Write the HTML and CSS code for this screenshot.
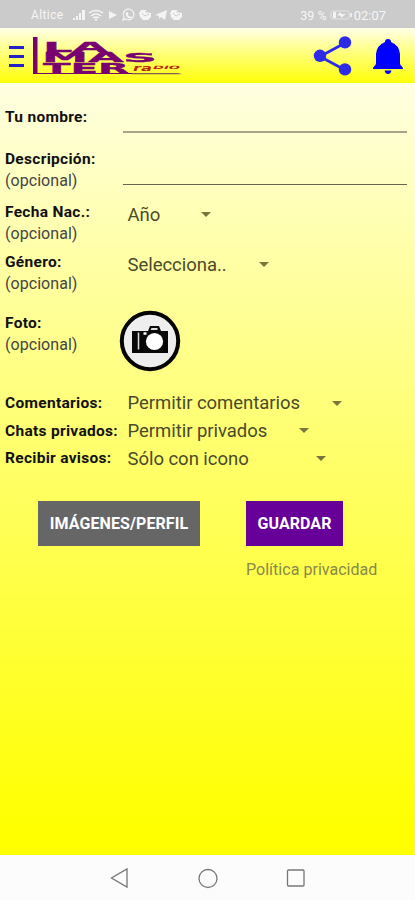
FILE: index.html
```html
<!DOCTYPE html>
<html lang="es">
<head>
<meta charset="utf-8">
<title>La Master Radio</title>
<link rel="stylesheet" href="styles.css">
</head>
<body>
<div class="status">
  <span class="carrier">Altice</span>
  <svg class="status-icons" width="112" height="14" viewBox="0 0 112 14" fill="#f4f4f4">
    <path d="M0 12V10h2v2zM3 12V8h2v4zM6 12V5h2v7zM9 12V2h3v10z"/>
    <g fill="none" stroke="#f4f4f4" stroke-width="1.4"><path d="M16 5q7-5 14 0M18 8q5-4 10 0M20 10q3-2 6 0"/></g>
    <circle cx="23" cy="11.500" r="1.200"/>
    <path d="M36 3l8 4-8 4z"/>
    <path d="M50 12l1-3a5.300 5.300 0 1 1 2 2z" fill="none" stroke="#f4f4f4" stroke-width="1.200"/>
    <path d="M53 4.500l1.500-.5 1 2-.7 1 2 1.700 1-.7 1 1.500c-3 3-7-2-5.800-5z"/>
    <path d="M68 2h6l-2 2 6 1v4l-3 3h-5l-3-3-1-4zM82 7l12-5-2 10-4-3-2 2v-3zM99 2h6l-2 2 6 1v4l-3 3h-5l-3-3-1-4z"/>
    <path d="M69 5l3 3 4-2M100 5l3 3 4-2" fill="none" stroke="#ccc"/>
  </svg>
  <span class="percent">39 %</span>
  <svg class="battery" width="23" height="12" viewBox="0 0 23 12"><rect x="1" y="2" width="18" height="8" rx="1.500" fill="none" stroke="#e4e4e4"/><path d="M3 3h3v6H3zM7 6l4-3v2h5l-5 4V7z" fill="#f4f4f4"/><path d="M20 4h2v4h-2z" fill="#eee"/></svg>
  <span class="clock">02:07</span>
</div>

<header class="header">
  <div class="burger"><i></i><i></i><i></i></div>
  <svg class="logo" width="156" height="42" viewBox="0 0 156 42">
    <path d="M1 0h4.500v36H100v1H1z" fill="#780070"/>
    <path d="M100 36h46l4 1.200h-50z" fill="#8a5a50"/>
    <g class="logo-text">
      <text x="11" y="14.500" textLength="65" lengthAdjust="spacingAndGlyphs">LA</text>
      <text x="10" y="25.300" textLength="82" lengthAdjust="spacingAndGlyphs">MA</text>
      <text class="logo-s" x="91" y="25.300" textLength="34" lengthAdjust="spacingAndGlyphs">S</text>
      <text x="11" y="36" textLength="86" lengthAdjust="spacingAndGlyphs">TER</text>
    </g>
    <g class="logo-radio">
      <text x="101" y="34" textLength="19" lengthAdjust="spacingAndGlyphs" font-size="9">ra</text>
      <text x="121" y="31.500" textLength="27" lengthAdjust="spacingAndGlyphs" font-size="4.500">DIO</text>
    </g>
  </svg>
  <svg class="share" width="40" height="42" viewBox="0 0 40 42" fill="#2b2be8"><path d="M32 7L7 20.500l25 13.500" fill="none" stroke="#2b2be8" stroke-width="2.800"/><circle cx="32" cy="6.400" r="6.200"/><circle cx="7" cy="19.800" r="6.200"/><circle cx="32" cy="33.400" r="6.200"/></svg>
  <svg class="bell" width="32" height="38" viewBox="0 0 32 38" fill="#00f"><path d="M13 4a3 3 0 0 1 6 0q8 3 9 12v9c0 3 3 3 3 6H1c0-3 3-3 3-6v-9q1-9 9-12zM12.500 32.500h7q-1 3.500-3.500 3.500t-3.500-3.500z"/></svg>
</header>

<main class="form">
  <div class="row name"><label>Tu nombre:</label><div class="input"></div></div>
  <div class="row desc"><label>Descripción:<small>(opcional)</small></label><div class="input"></div></div>
  <div class="row birth"><label>Fecha Nac.:<small>(opcional)</small></label><div class="select year"><span>Año</span><i></i></div></div>
  <div class="row gender"><label>Género:<small>(opcional)</small></label><div class="select sex"><span>Selecciona..</span><i></i></div></div>
  <div class="row photo"><label>Foto:<small>(opcional)</small></label>
    <svg width="62" height="62" viewBox="0 0 62 62"><circle cx="31" cy="31" r="28.200" fill="#eee" stroke="#050505" stroke-width="4"/><path d="M13 21h16l2-5h9l2 5h7v22H13z" fill="#080808"/><path d="M32.500 18h6v2h-7z" fill="#ddd"/><path d="M19.500 22.500v17" stroke="#ddd" stroke-width="1.500"/><circle cx="35.500" cy="31.500" r="8.600" fill="#fff"/><path d="M24.500 23.500h3" stroke="#fff" stroke-width="2.500"/></svg>
  </div>
  <div class="row line"><label>Comentarios:</label><div class="select comments"><span>Permitir comentarios</span><i></i></div></div>
  <div class="row line"><label>Chats privados:</label><div class="select chats"><span>Permitir privados</span><i></i></div></div>
  <div class="row line"><label>Recibir avisos:</label><div class="select notices"><span>Sólo con icono</span><i></i></div></div>
  <div class="actions">
    <button class="btn images">IMÁGENES/PERFIL</button>
    <button class="btn save">GUARDAR</button>
  </div>
  <a class="policy">Política privacidad</a>
</main>

<nav class="nav">
  <svg width="20" height="22" viewBox="0 0 20 22"><path d="M17 2v18L1.500 11z"/></svg>
  <svg width="20" height="22" viewBox="0 0 20 22"><circle cx="10" cy="11.500" r="9"/></svg>
  <svg width="20" height="22" viewBox="0 0 20 22"><rect x="1.500" y="3" width="16.500" height="16" rx="1"/></svg>
</nav>
</body>
</html>
```
FILE: styles.css
```css
* { box-sizing: border-box; }
body {
  margin: 0;
  width: 415px;
  height: 900px;
  overflow: hidden;
  display: flex;
  flex-direction: column;
  font-family: Roboto, "Liberation Sans", sans-serif;
}
svg { display: block; flex: none; }
.status {
  height: 28px;
  background: #cbcbcb;
  color: #f6f6f6;
  display: flex;
  align-items: center;
  padding: 2px 29px 0 31px;
  font-size: 12px;
  white-space: nowrap;
}
.carrier { width: 42px; letter-spacing: .4px; }
.percent { margin-left: auto; font-size: 12.5px; }
.battery { margin: 0 1px 0 3px; }
.clock { font-size: 12.8px; letter-spacing: .1px; }
.header {
  height: 55px;
  display: flex;
  align-items: flex-start;
  padding: 8px 11px 0 9px;
  background: linear-gradient(#ffffe8, #ffff70 50%, #ffff08);
}
.burger { width: 15px; padding-top: 10px; display: grid; gap: 6px; }
.burger i { height: 3px; background: #2222c8; }
.logo { margin: 1px 0 0 8px; }
.logo-text {
  font-family: "DejaVu Sans", sans-serif;
  font-weight: bold;
  font-size: 13.5px;
  fill: #780070;
  stroke: #780070;
  stroke-width: .3px;
}
.logo-s { font-size: 12.5px; }
.logo-radio {
  font-family: "DejaVu Sans", sans-serif;
  font-weight: bold;
  font-style: italic;
  fill: #b82810;
}
.share { margin-left: auto; margin-right: 19px; }
.bell { margin-top: 2px; }
.form {
  height: 772px;
  padding-top: 23px;
  background: linear-gradient(#ffffe2, #ffffa8 22%, #ffff60 53%, #ff0 97%);
}
.row {
  display: grid;
  grid-template-columns: 118px 1fr;
  padding: 0 8px 0 5px;
  font-size: 15.5px;
}
.row label {
  font-weight: bold;
  line-height: 22px;
  letter-spacing: .3px;
  color: #111;
  white-space: nowrap;
}
.row small {
  display: block;
  font-weight: normal;
  font-size: 16px;
  letter-spacing: .05px;
  color: #444;
}
.input { border-bottom: 1px solid #66664a; }
.name { height: 41.5px; }
.name .input { height: 27px; border-bottom: 2px solid #a5a588; }
.desc { height: 53.5px; }
.desc .input { height: 37.5px; border-bottom: 1.5px solid #666650; }
.birth { height: 50px; }
.gender { height: 55px; }
.photo { height: 86px; padding-top: 6px; }
.photo svg { margin-left: -4px; margin-top: -2px; }
.line { height: 27.7px; }
.select {
  display: flex;
  align-items: center;
  justify-content: space-between;
  height: 22px;
  margin-left: 4.5px;
  font-size: 18.5px;
  letter-spacing: -.04px;
  color: #4a4a2a;
  white-space: nowrap;
}
.select span { padding-top: .6px; }
.select i {
  margin-right: 1px;
  border: 5.5px solid transparent;
  border-top-color: #77773d;
  border-bottom: 0;
}
.year { width: 84px; margin-top: 2.5px; }
.sex { width: 142px; margin-top: 2.5px; }
.comments { width: 215px; }
.chats { width: 182px; }
.notices { width: 199px; }
.actions { display: flex; gap: 46px; padding: 26px 0 0 38px; }
.btn {
  height: 45px;
  border: 0;
  padding: 0;
  color: #fff;
  font: bold 16px Roboto, sans-serif;
  letter-spacing: .08px;
  white-space: nowrap;
}
.images { width: 162px; background: #666; }
.save { width: 97px; background: #609; }
.policy {
  display: block;
  margin: 13px 0 0 246px;
  font-size: 16px;
  line-height: 22px;
  letter-spacing: .03px;
  color: #88884a;
  white-space: nowrap;
}
.nav {
  height: 45px;
  background: #fcfcfc;
  display: flex;
  justify-content: center;
  gap: 68px;
  padding-top: 12px;
}
.nav svg { fill: none; stroke: #777; stroke-width: 1.3px; }
```
